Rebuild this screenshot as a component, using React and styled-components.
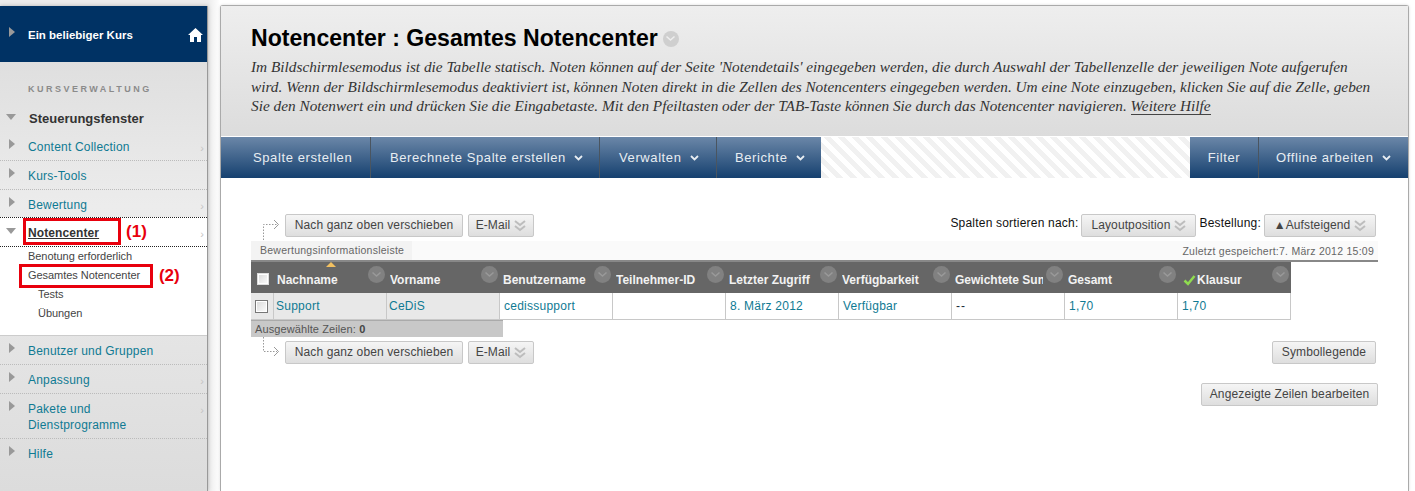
import React from 'react';
import styled, { createGlobalStyle } from 'styled-components';

const GlobalStyle = createGlobalStyle`
  html, body {
    margin: 0;
    padding: 0;
    background: #fff;
    overflow: hidden;
  }
  * { box-sizing: border-box; }
`;

const Page = styled.div`
  width: 1415px;
  height: 491px;
  overflow: hidden;
  display: flex;
  align-items: stretch;
  font-family: "Liberation Sans", Arial, sans-serif;
  background: linear-gradient(to right, #ececec 208px, #fff 220px);
`;

/* sidebar */
const Sidebar = styled.aside`
  width: 208px;
  height: 485px;
  margin-top: 6px;
  flex: none;
  background: linear-gradient(to bottom, #dadada 0, #ececec 200px, #dcdcdc 100%);
  border-right: 1px solid #999;
  box-shadow: 0 0 4px rgba(0, 0, 0, 0.25);
`;

const CourseBar = styled.div`
  height: 56px;
  background: #003264;
  display: flex;
  align-items: center;
  padding: 1px 4px 0 28px;
  position: relative;
  color: #fff;
  font-size: 11.5px;
  font-weight: bold;
  justify-content: space-between;
`;

const Arrow = styled.span`
  position: absolute;
  left: ${p => (p.$open ? 6 : 9)}px;
  top: ${p => p.$top}px;
  width: 0;
  height: 0;
  ${p => p.$open
    ? 'border-left: 5.5px solid transparent; border-right: 5.5px solid transparent; border-top: 6px solid #999;'
    : 'border-top: 5.5px solid transparent; border-bottom: 5.5px solid transparent; border-left: 6px solid #999;'}
`;

const Section = styled.div`
  font-size: 9px;
  font-weight: bold;
  letter-spacing: 2.5px;
  color: #8b8b8b;
  padding: 22px 0 0 28px;
  height: 41px;
`;

const PanelTitle = styled.div`
  position: relative;
  height: 29px;
  padding: 8px 0 0 29px;
  font-size: 13px;
  font-weight: bold;
  color: #333;
`;

const NavRow = styled.div`
  position: relative;
  padding: 7px 0 5px 28px;
  font-size: 12px;
  line-height: 16px;
  letter-spacing: 0.2px;
  color: #0f7a93;
  border-bottom: 1px dotted #bbb;
  ${p => p.$last && 'border-bottom: 0;'}
`;

const ActiveRow = styled(NavRow)`
  background: #fff;
  color: #333;
  font-weight: bold;
  text-decoration: underline;
  border-top: 1px dotted #222;
  border-bottom: 1px dotted #222;
  margin-top: -2px;
  height: 30px;
  padding-top: 7px;
  letter-spacing: 0.1px;
`;

const Chevron = styled.span`
  position: absolute;
  right: 3px;
  top: 8px;
  font-size: 11px;
  color: #c4c4c4;
  font-weight: normal;
`;

const SubList = styled.div`
  background: #fff;
  height: 89px;
  padding-top: 1px;
  border-bottom: 1px solid #ccc;
`;

const SubItem = styled.div`
  position: relative;
  height: 19px;
  line-height: 17px;
  font-size: 11px;
  letter-spacing: -0.05px;
  color: #444;
  padding-left: ${p => (p.$deep ? 38 : 28)}px;
`;

const RedBox = styled.span`
  position: absolute;
  border: 3px solid #e8000d;
  left: ${p => p.$left}px;
  top: ${p => p.$top}px;
  width: ${p => p.$width}px;
  height: ${p => p.$height}px;
`;

const RedLabel = styled.span`
  position: absolute;
  left: ${p => p.$left}px;
  top: ${p => p.$top}px;
  color: #e8000d;
  font-size: 17px;
  line-height: 20px;
  font-weight: bold;
`;

/* main panel */
const Main = styled.main`
  width: 1189px;
  height: 486px;
  margin: 5px 0 0 12px;
  flex: none;
  background: #fff;
  border: 1px solid #aaa;
  border-bottom: 0;
  border-radius: 3px 3px 0 0;
  box-shadow: 0 0 3px rgba(0, 0, 0, 0.15);
`;

const Header = styled.header`
  height: 131px;
  padding: 19px 0 0 30px;
  background: linear-gradient(to bottom, #eeeeee, #dcdcdc);
  border-bottom: 1px solid #fff;
`;

const TitleRow = styled.div`
  display: flex;
  align-items: center;
  gap: 5px;
  height: 27px;
`;

const Title = styled.h1`
  margin: 0;
  font-size: 23.1px;
  line-height: 27px;
  font-weight: bold;
  color: #000;
`;

const RoundBtn = styled.span`
  display: inline-flex;
  align-items: center;
  justify-content: center;
  width: ${p => p.$size || 16}px;
  height: ${p => p.$size || 16}px;
  border-radius: 50%;
  background: ${p => p.$bg || '#cfcfcf'};
  flex: none;
`;

const Instructions = styled.p`
  margin: 5px 0 0;
  font-family: "Liberation Serif", "Times New Roman", serif;
  font-style: italic;
  font-size: 15.3px;
  line-height: 19.5px;
  color: #333;
  width: 1125px;
`;

const HelpLink = styled.span`
  border-bottom: 1px solid #444;
`;

const Toolbar = styled.nav`
  height: 41px;
  display: flex;
  background: repeating-linear-gradient(45deg, #fff 0, #fff 5px, #f1f1f1 5px, #f1f1f1 10px);
`;

const ToolGroup = styled.div`
  display: flex;
  margin-left: ${p => (p.$right ? 'auto' : 0)};
  background: linear-gradient(to bottom, #6b87a8, #15406f);
`;

const ToolItem = styled.div`
  width: ${p => p.$width}px;
  display: flex;
  align-items: center;
  justify-content: ${p => (p.$center ? 'center' : 'flex-start')};
  padding-left: ${p => p.$pad || 0}px;
  gap: 8px;
  color: #e8edf2;
  font-size: 13px;
  letter-spacing: 0.6px;
  border-right: 1px solid #4a5560;
  &:last-child { border-right: 0; }
`;

const Content = styled.div`
  padding: 36px 0 0 30px;
  position: relative;
`;

const ActionBar = styled.div`
  display: flex;
  align-items: center;
  height: 23px;
  width: 1125px;
`;

const Connector = styled.svg`
  width: 34px;
  height: 27px;
  flex: none;
  overflow: visible;
  align-self: ${p => (p.$down ? 'flex-start' : 'flex-end')};
`;

const Button = styled.div`
  height: 23px;
  display: inline-flex;
  align-items: center;
  justify-content: center;
  gap: 4px;
  width: ${p => p.$width}px;
  margin-left: ${p => p.$gap || 0}px;
  padding-bottom: 1px;
  background: linear-gradient(to bottom, #f5f5f5, #dedede);
  border: 1px solid #c8c8c8;
  border-radius: 2px;
  font-size: 12px;
  letter-spacing: 0.12px;
  color: #444;
  flex: none;
`;

const PushedButton = styled(Button)`
  margin-left: auto;
`;

const SortLabel = styled.span`
  font-size: 12px;
  color: #111;
  margin: -6px 3px 0 ${p => (p.$auto ? 'auto' : '3px')};
  letter-spacing: 0.2px;
`;

const InfoBar = styled.div`
  width: 1127px;
  height: 19px;
  margin-top: 4px;
  display: flex;
  justify-content: space-between;
  align-items: center;
  background: #fafafa;
  font-size: 10.5px;
  letter-spacing: 0.25px;
  color: #666;
`;

const InfoTab = styled.span`
  width: 161px;
  height: 19px;
  line-height: 19px;
  background: #f3f3f3;
  padding-left: 9px;
`;

const InfoSaved = styled.span`
  padding-right: 4px;
`;

const GradeRule = styled.div`
  width: 1127px;
  height: 2px;
  background: #888;
`;

const Grid = styled.div`
  display: grid;
  grid-template-columns: 23px repeat(9, 113px);
  width: 1040px;
`;

const HeadCell = styled.div`
  position: relative;
  height: 31px;
  background: #666;
  color: #f2f2f2;
  font-size: 12px;
  font-weight: bold;
  padding: 11px 0 0 ${p => p.$pad ?? 3}px;
  white-space: nowrap;
  overflow: hidden;
`;

const ClipText = styled.span`
  display: block;
  width: 88px;
  overflow: hidden;
`;

const HeadMenu = styled(RoundBtn)`
  position: absolute;
  right: 2px;
  top: 4px;
`;

const SortCaret = styled.span`
  position: absolute;
  left: 52px;
  top: 0;
  width: 0;
  height: 0;
  border-left: 5px solid transparent;
  border-right: 5px solid transparent;
  border-bottom: 5px solid #f2c060;
`;

const CheckMark = styled.svg`
  margin: 0 1px 0 2px;
  vertical-align: -2px;
`;

const BodyCell = styled.div`
  height: 27px;
  display: flex;
  align-items: center;
  padding-left: ${p => p.$pad ?? 4}px;
  background: ${p => (p.$shade ? '#e8e8e8' : '#fff')};
  border-right: 1px solid #c8c8c8;
  border-bottom: 1px solid #c8c8c8;
  &:first-child { border-left: 1px solid #c8c8c8; }
  font-size: 12px;
  letter-spacing: ${p => (p.$plain ? '1px' : '0.25px')};
  color: ${p => (p.$plain ? '#1a2a3a' : '#0f7a93')};
`;

const CheckBox = styled.span`
  display: inline-block;
  width: ${p => p.$size}px;
  height: ${p => p.$size}px;
  background: linear-gradient(135deg, #d8d8d8, #fdfdfd);
  border: 1px solid ${p => (p.$dark ? '#777' : '#ddd')};
  box-shadow: inset 0 0 0 1px #fff;
`;

const SelectedBar = styled.div`
  width: 252px;
  height: 17px;
  line-height: 16px;
  padding-left: 4px;
  background: #c8c8c8;
  border-top: 1px solid #aaa;
  font-size: 11px;
  letter-spacing: 0.1px;
  color: #555;
  b { color: #444; }
`;

const BottomBar = styled(ActionBar)`
  margin-top: 4px;
`;

const RightAlign = styled.div`
  width: 1127px;
  display: flex;
  justify-content: flex-end;
  margin-top: ${p => p.$top || 0}px;
`;

const Chevrons = ({ color = '#bdbdbd' }) => (
  <svg width="12" height="13" viewBox="0 0 12 13" fill="none" stroke={color} strokeWidth="2">
    <path d="M1 2l5 4 5-4M1 7l5 4 5-4" />
  </svg>
);

const MenuArrow = () => (
  <svg width="9" height="6" viewBox="0 0 9 6" fill="none" stroke="#e8edf2" strokeWidth="1.8">
    <path d="M1 1l3.500 3.500L8 1" />
  </svg>
);

const MenuDot = ({ stroke = '#9a9a9a' }) => (
  <svg width="11" height="7" viewBox="0 0 11 7" fill="none" stroke={stroke} strokeWidth="1.6">
    <path d="M1.500 1.500l4 3.500 4-3.500" />
  </svg>
);

const columns = [
  { name: 'Nachname', value: 'Support', shade: true },
  { name: 'Vorname', value: 'CeDiS', shade: true },
  { name: 'Benutzername', value: 'cedissupport' },
  { name: 'Teilnehmer-ID', value: '' },
  { name: 'Letzter Zugriff', value: '8. März 2012' },
  { name: 'Verfügbarkeit', value: 'Verfügbar' },
  { name: 'Gewichtete Summe', value: '--', plain: true },
  { name: 'Gesamt', value: '1,70' },
  { name: 'Klausur', value: '1,70', check: true },
];

const navTop = [
  { label: 'Content Collection', more: true },
  { label: 'Kurs-Tools' },
  { label: 'Bewertung', more: true },
];

const navBottom = [
  { label: 'Benutzer und Gruppen' },
  { label: 'Anpassung', more: true },
  { label: 'Pakete und Dienstprogramme', more: true },
  { label: 'Hilfe', last: true },
];

const NavEntry = ({ item }) => (
  <NavRow $last={item.last}>
    <Arrow $top={7} />
    {item.label === 'Pakete und Dienstprogramme' ? <>Pakete und<br />Dienstprogramme</> : item.label}
    {item.more && <Chevron>›</Chevron>}
  </NavRow>
);

export default function App() {
  return (
    <Page>
      <GlobalStyle />
      <Sidebar>
        <CourseBar>
          <Arrow $top={21} />
          <span>Ein beliebiger Kurs</span>
          <svg width="15" height="14" viewBox="0 0 15 14" fill="#fff">
            <path d="M7.500 0L15 7h-2v7H9V9H6v5H2V7H0z" />
          </svg>
        </CourseBar>
        <Section>KURSVERWALTUNG</Section>
        <PanelTitle>
          <Arrow $open $top={11} />
          Steuerungsfenster
        </PanelTitle>
        {navTop.map(item => <NavEntry key={item.label} item={item} />)}
        <ActiveRow>
          <Arrow $open $top={10} />
          Notencenter
          <Chevron>›</Chevron>
          <RedBox $left={23} $top={0} $width={98} $height={27} />
          <RedLabel $left={126} $top={4}>(1)</RedLabel>
        </ActiveRow>
        <SubList>
          <SubItem>Benotung erforderlich</SubItem>
          <SubItem>
            Gesamtes Notencenter
            <RedBox $left={19} $top={-3} $width={134} $height={24} />
            <RedLabel $left={159} $top={-1}>(2)</RedLabel>
          </SubItem>
          <SubItem $deep>Tests</SubItem>
          <SubItem $deep>Übungen</SubItem>
        </SubList>
        {navBottom.map(item => <NavEntry key={item.label} item={item} />)}
      </Sidebar>

      <Main>
        <Header>
          <TitleRow>
            <Title>Notencenter : Gesamtes Notencenter</Title>
            <RoundBtn><MenuDot stroke="#eee" /></RoundBtn>
          </TitleRow>
          <Instructions>
            Im Bildschirmlesemodus ist die Tabelle statisch. Noten können auf der Seite 'Notendetails' eingegeben werden, die durch Auswahl der Tabellenzelle der jeweiligen Note aufgerufen wird. Wenn der Bildschirmlesemodus deaktiviert ist, können Noten direkt in die Zellen des Notencenters eingegeben werden. Um eine Note einzugeben, klicken Sie auf die Zelle, geben Sie den Notenwert ein und drücken Sie die Eingabetaste. Mit den Pfeiltasten oder der TAB-Taste können Sie durch das Notencenter navigieren. <HelpLink>Weitere Hilfe</HelpLink>
          </Instructions>
        </Header>

        <Toolbar>
          <ToolGroup>
            <ToolItem $width={150} $pad={32}>Spalte erstellen</ToolItem>
            <ToolItem $width={229} $pad={19}>Berechnete Spalte erstellen <MenuArrow /></ToolItem>
            <ToolItem $width={117} $pad={19}>Verwalten <MenuArrow /></ToolItem>
            <ToolItem $width={104} $pad={18}>Berichte <MenuArrow /></ToolItem>
          </ToolGroup>
          <ToolGroup $right>
            <ToolItem $width={69} $center>Filter</ToolItem>
            <ToolItem $width={149} $pad={17}>Offline arbeiten <MenuArrow /></ToolItem>
          </ToolGroup>
        </Toolbar>

        <Content>
          <ActionBar>
            <Connector viewBox="0 0 34 27" fill="none" stroke="#999" strokeDasharray="1.500 1.500">
              <path d="M12.500 30V14.500H26" />
              <path d="M23 10l4.500 4.500-4.500 4.500" strokeDasharray="none" />
            </Connector>
            <Button $width={178}>Nach ganz oben verschieben</Button>
            <Button $width={66} $gap={5}>E-Mail <Chevrons /></Button>
            <SortLabel $auto>Spalten sortieren nach:</SortLabel>
            <Button $width={115}>Layoutposition <Chevrons /></Button>
            <SortLabel>Bestellung:</SortLabel>
            <Button $width={112}>▲Aufsteigend <Chevrons /></Button>
          </ActionBar>

          <InfoBar>
            <InfoTab>Bewertungsinformationsleiste</InfoTab>
            <InfoSaved>Zuletzt gespeichert:7. März 2012 15:09</InfoSaved>
          </InfoBar>
          <GradeRule />

          <Grid>
            <HeadCell $pad={6}><CheckBox $size={12} /></HeadCell>
            {columns.map((col, i) => (
              <HeadCell key={col.name}>
                {i === 0 && <SortCaret />}
                <ClipText>
                  {col.check && (
                    <CheckMark width="13" height="11" viewBox="0 0 13 11" fill="none" stroke="#8fdc50" strokeWidth="2.500">
                      <path d="M1.500 5.500l3.500 3.500 6.500-8" />
                    </CheckMark>
                  )}
                  {col.name}
                </ClipText>
                <HeadMenu $bg="#818181" $size={17}><MenuDot stroke="#999" /></HeadMenu>
              </HeadCell>
            ))}
            <BodyCell $shade $pad={4}><CheckBox $size={13} $dark /></BodyCell>
            {columns.map(col => (
              <BodyCell key={col.name} $shade={col.shade} $plain={col.plain} $pad={col.shade ? 2 : 4}>{col.value}</BodyCell>
            ))}
          </Grid>
          <SelectedBar>Ausgewählte Zeilen: <b>0</b></SelectedBar>

          <BottomBar>
            <Connector $down viewBox="0 0 34 27" fill="none" stroke="#999" strokeDasharray="1.500 1.500">
              <path d="M12.500 -4V10.500H26" />
              <path d="M23 6l4.500 4.500-4.500 4.500" strokeDasharray="none" />
            </Connector>
            <Button $width={178}>Nach ganz oben verschieben</Button>
            <Button $width={66} $gap={5}>E-Mail <Chevrons /></Button>
            <PushedButton $width={104}>Symbollegende</PushedButton>
          </BottomBar>

          <RightAlign $top={19}>
            <Button $width={177}>Angezeigte Zeilen bearbeiten</Button>
          </RightAlign>
        </Content>
      </Main>
    </Page>
  );
}
